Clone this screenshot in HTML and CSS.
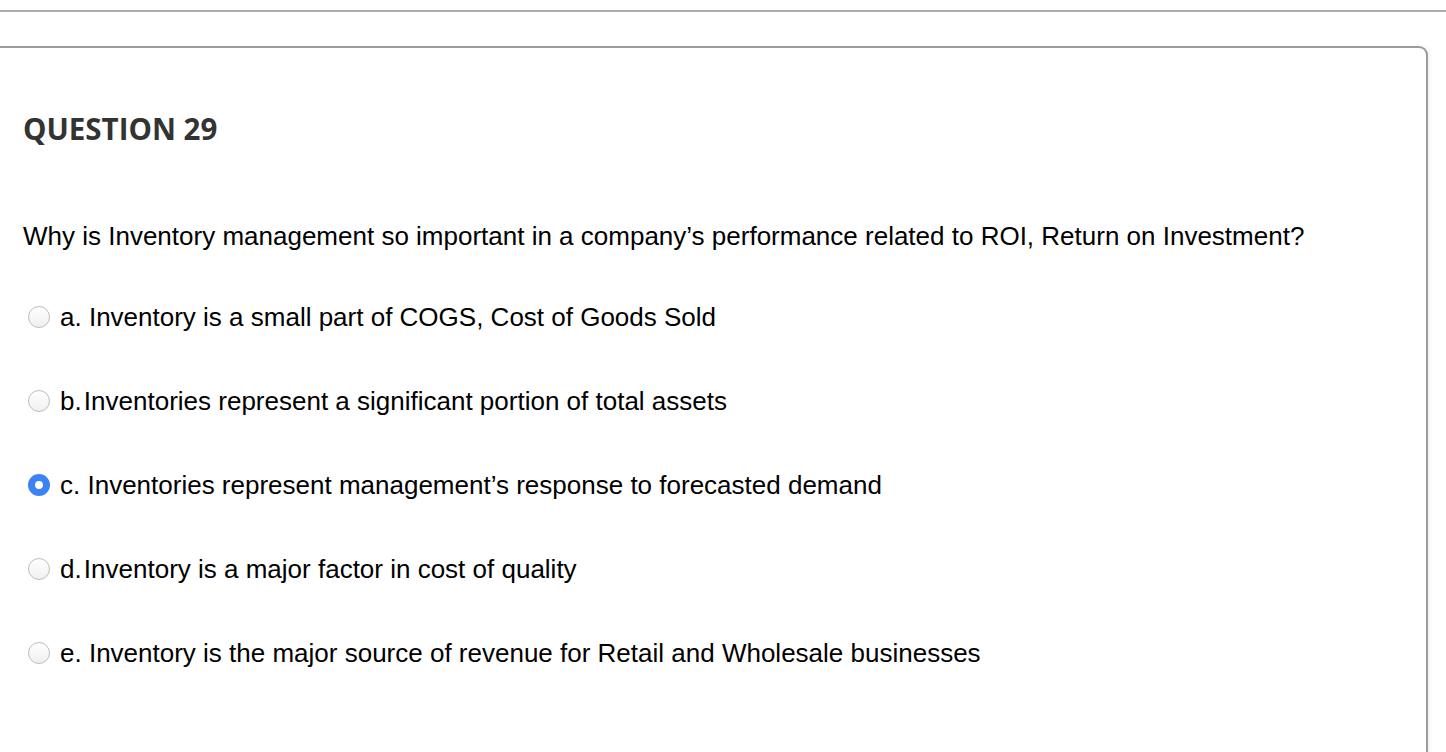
FILE: index.html
```html
<!DOCTYPE html>
<html>
<head>
<meta charset="utf-8">
<link rel="stylesheet" href="styles.css">
</head>
<body>
<div class="topline"></div>
<div class="box">
  <h2 class="qtitle">QUESTION 29</h2>
  <p class="qtext">Why is Inventory management so important in a company’s performance related to ROI, Return on Investment?</p>
  <ul class="options">
    <li class="opt"><span class="radio"></span><span class="label">a. Inventory is a small part of COGS, Cost of Goods Sold</span></li>
    <li class="opt"><span class="radio"></span><span class="label">b.&#8202;Inventories represent a significant portion of total assets</span></li>
    <li class="opt"><span class="radio checked"></span><span class="label">c. Inventories represent management’s response to forecasted demand</span></li>
    <li class="opt"><span class="radio"></span><span class="label">d.&#8202;Inventory is a major factor in cost of quality</span></li>
    <li class="opt"><span class="radio"></span><span class="label">e. Inventory is the major source of revenue for Retail and Wholesale businesses</span></li>
  </ul>
</div>
</body>
</html>
```
FILE: styles.css
```css
html, body {
  margin: 0;
  padding: 0;
  background: #ffffff;
  overflow: hidden;
}
body {
  height: 752px;
  padding-top: 10px;
  box-sizing: border-box;
}
.topline {
  height: 0;
  border-top: 2px solid #ababab;
}
.box {
  box-sizing: border-box;
  margin-top: 34px;
  margin-left: -20px;
  margin-right: 18px;
  height: 708px;
  border: 2px solid #9b9b9b;
  border-bottom: none;
  border-radius: 0 9px 0 0;
  box-shadow: 3px 0 4px -1px rgba(0,0,0,0.06);
  padding-left: 41px;
  padding-top: 0;
}
.qtitle {
  margin: 0;
  padding-top: 62px;
  font-family: "Open Sans", sans-serif;
  font-weight: 700;
  font-size: 29.5px;
  line-height: 38px;
  color: #333333;
}
.qtext {
  margin: 73px 0 0 0;
  font-family: "Liberation Sans", Arial, sans-serif;
  font-size: 26px;
  line-height: 30px;
  color: #000;
}
.options {
  list-style: none;
  margin: 51px 0 0 0;
  padding: 0;
}
.opt {
  display: flex;
  align-items: center;
  height: 30px;
  margin-bottom: 54px;
}
.radio {
  width: 22px;
  height: 22px;
  border-radius: 50%;
  border: 1px solid #bdbdbd;
  background: linear-gradient(#ffffff, #f0f0f0);
  box-sizing: border-box;
  margin-left: 5px;
  margin-right: 10px;
  flex: none;
}
.radio.checked {
  border: 7px solid #3b82f6;
  background: #ffffff;
}
.label {
  font-family: "Liberation Sans", Arial, sans-serif;
  font-size: 26px;
  line-height: 30px;
  color: #000;
  white-space: nowrap;
}
```
